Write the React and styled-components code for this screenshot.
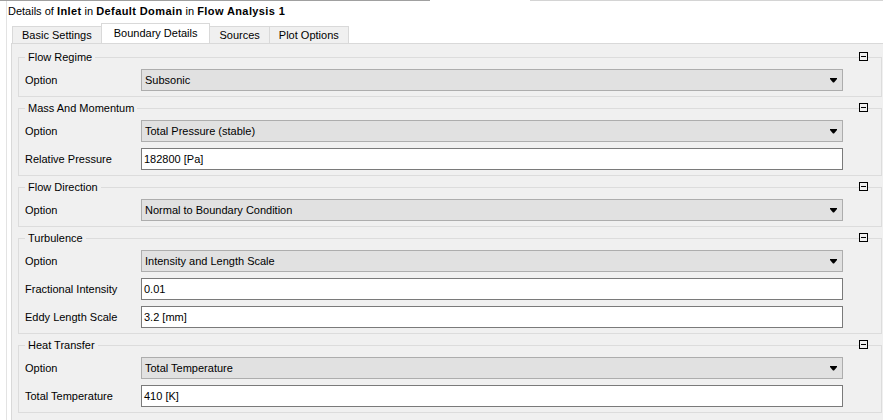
import React from "react";
import styled, { createGlobalStyle } from "styled-components";

const GlobalStyle = createGlobalStyle`
  html, body { margin: 0; padding: 0; background: #ffffff; overflow: hidden; }
  body { font-family: "Liberation Sans", Arial, sans-serif; font-size: 11px; color: #000; }
  * { box-sizing: border-box; }
`;

const TopStrip = styled.div`
  display: flex;
  height: 1px;
`;

const StripSegment = styled.div`
  width: ${(p) => p.$w}px;
  margin-left: ${(p) => p.$ml || 0}px;
  border-bottom: 1px solid ${(p) => p.$c};
  border-left: ${(p) => (p.$edge ? `1px solid ${p.$c}` : "none")};
`;

const Page = styled.div`
  margin-left: 6px;
  border-left: 1px solid #e3e3e3;
  height: 419px;
  width: 877px;
`;

const Title = styled.div`
  height: 20px;
  line-height: 20px;
  padding-left: 1px;
  white-space: nowrap;
  b { font-weight: bold; letter-spacing: 0.4px; }
`;

const TabBar = styled.div`
  display: flex;
  align-items: flex-end;
  height: 22px;
  margin-left: 6px;
`;

const Tab = styled.div`
  height: ${(p) => (p.$active ? 20 : 17)}px;
  line-height: ${(p) => (p.$active ? 19 : 17)}px;
  padding: 0 ${(p) => (p.$active ? 12 : 9)}px;
  background: ${(p) => (p.$active ? "#ffffff" : "#f0f0f0")};
  border: 1px solid #d9d9d9;
  border-bottom: none;
  margin-left: -1px;
  white-space: nowrap;
  position: relative;
  z-index: ${(p) => (p.$active ? 1 : 0)};
`;

const Panel = styled.div`
  margin-left: 4px;
  width: 900px;
  height: 380px;
  background: #f0f0f0;
  border: 1px solid #d9d9d9;
  padding: 6px 0 0 6px;
  display: flex;
  flex-direction: column;
  gap: 4px;
`;

const Group = styled.fieldset`
  position: relative;
  width: 864px;
  margin: 0;
  min-width: 0;
  padding: 5px 6px 5px;
  border: 1px solid #dcdcdc;
  display: flex;
  flex-direction: column;
  gap: 6px;
`;

const Legend = styled.legend`
  padding: 0 3px;
  line-height: 14px;
  font-size: 11px;
`;

const CollapseButton = styled.div`
  position: absolute;
  top: -12px;
  right: 13px;
  width: 9px;
  height: 9px;
  border: 1px solid #000;
  background: #f0f0f0;
  display: flex;
  align-items: center;
  justify-content: center;
  &::after {
    content: "";
    width: 5px;
    height: 1px;
    background: #000;
  }
`;

const Row = styled.div`
  display: flex;
  align-items: center;
  height: 22px;
`;

const Label = styled.div`
  width: 116px;
  white-space: nowrap;
`;

const Combo = styled.div`
  width: 702px;
  height: 22px;
  background: #e1e1e1;
  border: 1px solid #adadad;
  display: flex;
  align-items: center;
  justify-content: space-between;
  padding: 0 5px 0 3px;
`;

const Field = styled.div`
  width: 702px;
  height: 22px;
  background: #ffffff;
  border: 1px solid #7a7a7a;
  display: flex;
  align-items: center;
  padding: 0 2px;
`;

const Arrow = () => (
  <svg width="7" height="5" viewBox="0 0 7 5" style={{ display: "block" }}>
    <path d="M0 0H7V1L4 4.5H3L0 1Z" fill="#000" />
  </svg>
);

const groups = [
  {
    title: "Flow Regime",
    rows: [{ label: "Option", value: "Subsonic", combo: true }],
  },
  {
    title: "Mass And Momentum",
    rows: [
      { label: "Option", value: "Total Pressure (stable)", combo: true },
      { label: "Relative Pressure", value: "182800 [Pa]" },
    ],
  },
  {
    title: "Flow Direction",
    rows: [{ label: "Option", value: "Normal to Boundary Condition", combo: true }],
  },
  {
    title: "Turbulence",
    rows: [
      { label: "Option", value: "Intensity and Length Scale", combo: true },
      { label: "Fractional Intensity", value: "0.01" },
      { label: "Eddy Length Scale", value: "3.2 [mm]" },
    ],
  },
  {
    title: "Heat Transfer",
    rows: [
      { label: "Option", value: "Total Temperature", combo: true },
      { label: "Total Temperature", value: "410 [K]" },
    ],
  },
];

const tabs = ["Basic Settings", "Boundary Details", "Sources", "Plot Options"];

export default function App() {
  return (
    <>
      <GlobalStyle />
      <TopStrip>
        <StripSegment $w={430} $c="#a0a0a0" />
        <StripSegment $w={353} $ml={100} $c="#d4d4d4" $edge />
      </TopStrip>
      <Page>
        <Title>
          Details of <b>Inlet</b> in <b>Default Domain</b> in <b>Flow Analysis 1</b>
        </Title>
        <TabBar>
          {tabs.map((t) => (
            <Tab key={t} $active={t === "Boundary Details"}>
              {t}
            </Tab>
          ))}
        </TabBar>
        <Panel>
          {groups.map((g) => (
            <Group key={g.title}>
              <Legend>{g.title}</Legend>
              <CollapseButton />
              {g.rows.map((r) => (
                <Row key={r.label + r.value}>
                  <Label>{r.label}</Label>
                  {r.combo ? (
                    <Combo>
                      <span>{r.value}</span>
                      <Arrow />
                    </Combo>
                  ) : (
                    <Field>{r.value}</Field>
                  )}
                </Row>
              ))}
            </Group>
          ))}
        </Panel>
      </Page>
    </>
  );
}
